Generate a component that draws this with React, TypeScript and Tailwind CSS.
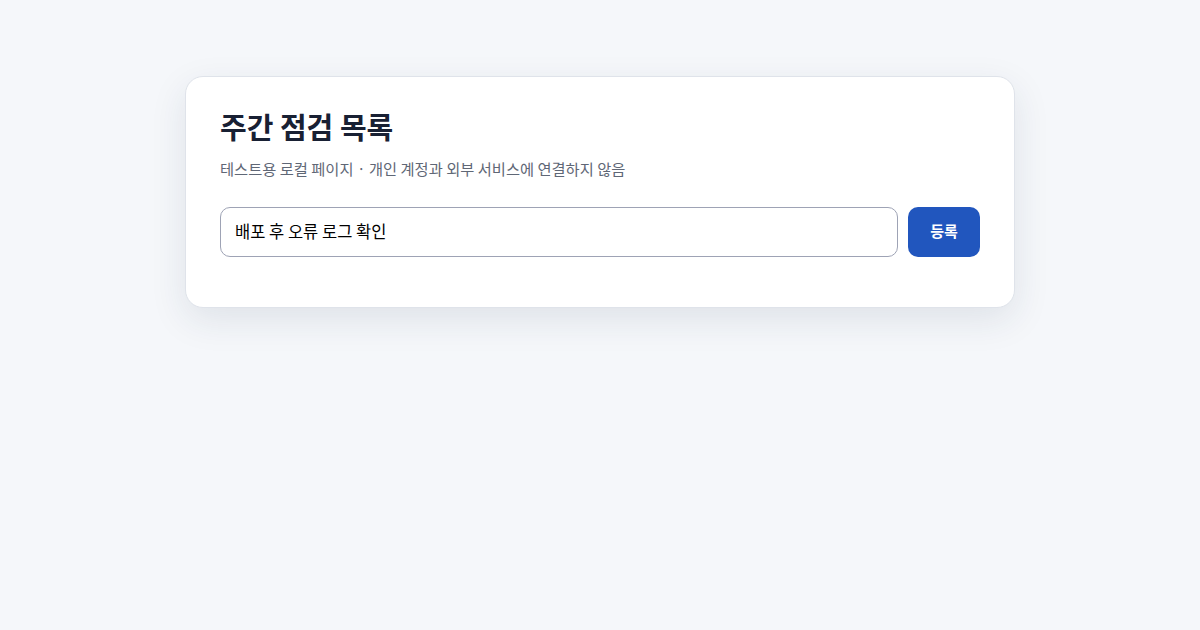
import { useState } from "react";

export default function App() {
  const [task, setTask] = useState("배포 후 오류 로그 확인");

  return (
    <div
      className="min-h-screen w-full bg-[#f5f7fa] pt-[76px]"
      style={{ fontFamily: '"Noto Sans CJK KR", "Noto Sans", sans-serif' }}
    >
      <div className="mx-auto w-[830px] rounded-[18px] border border-[#dfe3ea] bg-white px-[34px] pt-[32px] pb-[50px] shadow-[0_12px_36px_rgba(30,45,80,0.10)]">
        <h1 className="text-[29px] font-bold leading-[34px] text-[#182033]">
          주간 점검 목록
        </h1>
        <p className="mt-[14px] text-[15.3px] leading-[22px] text-[#5f6776]">
          테스트용 로컬 페이지 · 개인 계정과 외부 서비스에 연결하지 않음
        </p>
        <form
          className="mt-[28px] flex gap-[10px]"
          onSubmit={(e) => e.preventDefault()}
        >
          <input
            value={task}
            onChange={(e) => setTask(e.target.value)}
            className="h-[50px] flex-1 rounded-[10px] border border-[#9ea3b5] px-[14px] pb-[2px] text-[16.5px] text-black outline-none"
          />
          <button
            type="submit"
            className="h-[50px] w-[72px] rounded-[10px] bg-[#2156be] pb-[2px] text-[15px] font-bold text-white"
          >
            등록
          </button>
        </form>
      </div>
    </div>
  );
}
